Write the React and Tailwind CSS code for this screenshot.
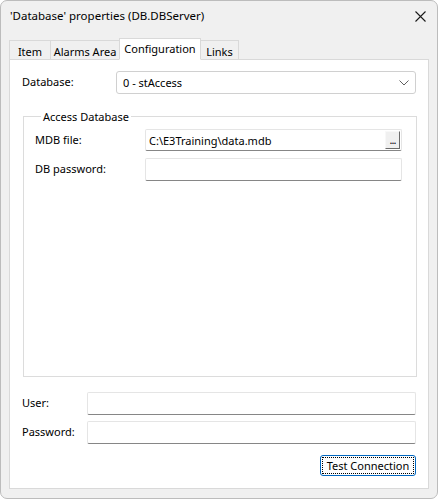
import React from 'react'

const font = { fontFamily: '"Noto Sans", "Segoe UI", Arial, sans-serif' }

const TextBox = ({ value, className = '', children }) => (
  <div className={`relative flex items-center bg-white border border-[#e5e5e5] border-b-[#868686] rounded-[2px] ${className}`}>
    <span className="pl-[3px] text-[11px] leading-none text-black">{value}</span>
    {children}
  </div>
)

const Row = ({ label, labelW, children, className = '' }) => (
  <div className={`flex items-center ${className}`}>
    <span className={`${labelW} shrink-0 text-[11px] text-black`}>{label}</span>
    {children}
  </div>
)

export default function App() {
  const tabs = [
    { name: 'Item', w: 'w-[42px]' },
    { name: 'Alarms Area', w: 'w-[70px]' },
    { name: 'Configuration', w: 'w-[82px]' },
    { name: 'Links', w: 'w-[39px]' },
  ]
  const active = 'Configuration'

  return (
    <div className="w-[438px] h-[499px] bg-[#f0f0f0] border border-[#bcbcbc] rounded-[7px] flex flex-col overflow-hidden" style={font}>
      {/* Title bar */}
      <div className="h-[30px] shrink-0 flex items-center justify-between pl-[9px] pr-[10px]">
        <span className="text-[11.5px] text-black">'Database' properties (DB.DBServer)</span>
        <svg width="11" height="11" viewBox="0 0 11 11" className="mr-[1px]">
          <path d="M0.5 0.5 L10.5 10.5 M10.5 0.5 L0.5 10.5" stroke="#1a1a1a" strokeWidth="1.1" />
        </svg>
      </div>

      {/* Tabs */}
      <div className="flex items-end h-[28px] shrink-0 pl-[8px]">
        {tabs.map((t) =>
          t.name === active ? (
            <div key={t.name} className={`${t.w} h-[22px] flex items-center justify-center bg-white border border-[#d9d9d9] border-b-white -mb-[1px] -ml-[1px] relative z-10`}>
              <span className="text-[11px] text-black leading-none pb-[1px]">{t.name}</span>
            </div>
          ) : (
            <div key={t.name} className={`${t.w} h-[19px] flex items-center justify-center bg-[#f0f0f0] border border-[#d9d9d9] border-b-0 -ml-[1px] first:ml-0`}>
              <span className="text-[11px] text-black leading-none pt-[2px]">{t.name}</span>
            </div>
          )
        )}
      </div>

      {/* Panel */}
      <div className="mx-[8px] w-[420px] h-[430px] bg-white border border-[#d9d9d9] pt-[11px] px-[12px] flex flex-col">
        <Row label="Database:" labelW="w-[94px]">
          <div className="w-[300px] h-[23px] bg-white border border-[#d0d0d0] rounded-[3px] flex items-center justify-between pl-[6px] pr-[6px]">
            <span className="text-[11px] leading-none text-black">0 - stAccess</span>
            <svg width="10" height="6" viewBox="0 0 10 6">
              <path d="M0.5 0.5 L5 5 L9.5 0.5" fill="none" stroke="#606060" strokeWidth="1" />
            </svg>
          </div>
        </Row>

        <fieldset className="mt-[15px] ml-[1px] w-[394px] h-[268px] border border-[#dcdcdc] px-[11px] pb-0 flex flex-col">
          <legend className="ml-[6px] px-[2px] text-[11px] text-black leading-[15px]">Access Database</legend>
          <Row label="MDB file:" labelW="w-[110px]" className="mt-[5px]">
            <TextBox value="C:\E3Training\data.mdb" className="w-[257px] h-[22px]">
              <div className="absolute right-[1px] top-[1px] w-[15px] h-[18px] bg-[#f0f0f0] border border-[#f8f8f8] border-r-[#6b6b6b] border-b-[#6b6b6b] flex items-end justify-center pb-[3px]">
                <span className="text-[11px] leading-none text-black tracking-[-1px]">...</span>
              </div>
            </TextBox>
          </Row>
          <Row label="DB password:" labelW="w-[110px]" className="mt-[7px]">
            <TextBox value="" className="w-[257px] h-[23px]" />
          </Row>
        </fieldset>

        <Row label="User:" labelW="w-[65px]" className="mt-[15px]">
          <TextBox value="" className="w-[329px] h-[23px]" />
        </Row>
        <Row label="Password:" labelW="w-[65px]" className="mt-[6px]">
          <TextBox value="" className="w-[329px] h-[23px]" />
        </Row>

        <div className="flex justify-end mt-[11px]">
          <button className="w-[96px] h-[21px] bg-[#fdfdfd] border border-[#0067c0] rounded-[3px] p-[1px] flex">
            <span className="flex-1 border border-dotted border-black flex items-center justify-center text-[11px] leading-none text-black whitespace-nowrap">
              Test Connection
            </span>
          </button>
        </div>
      </div>
    </div>
  )
}
